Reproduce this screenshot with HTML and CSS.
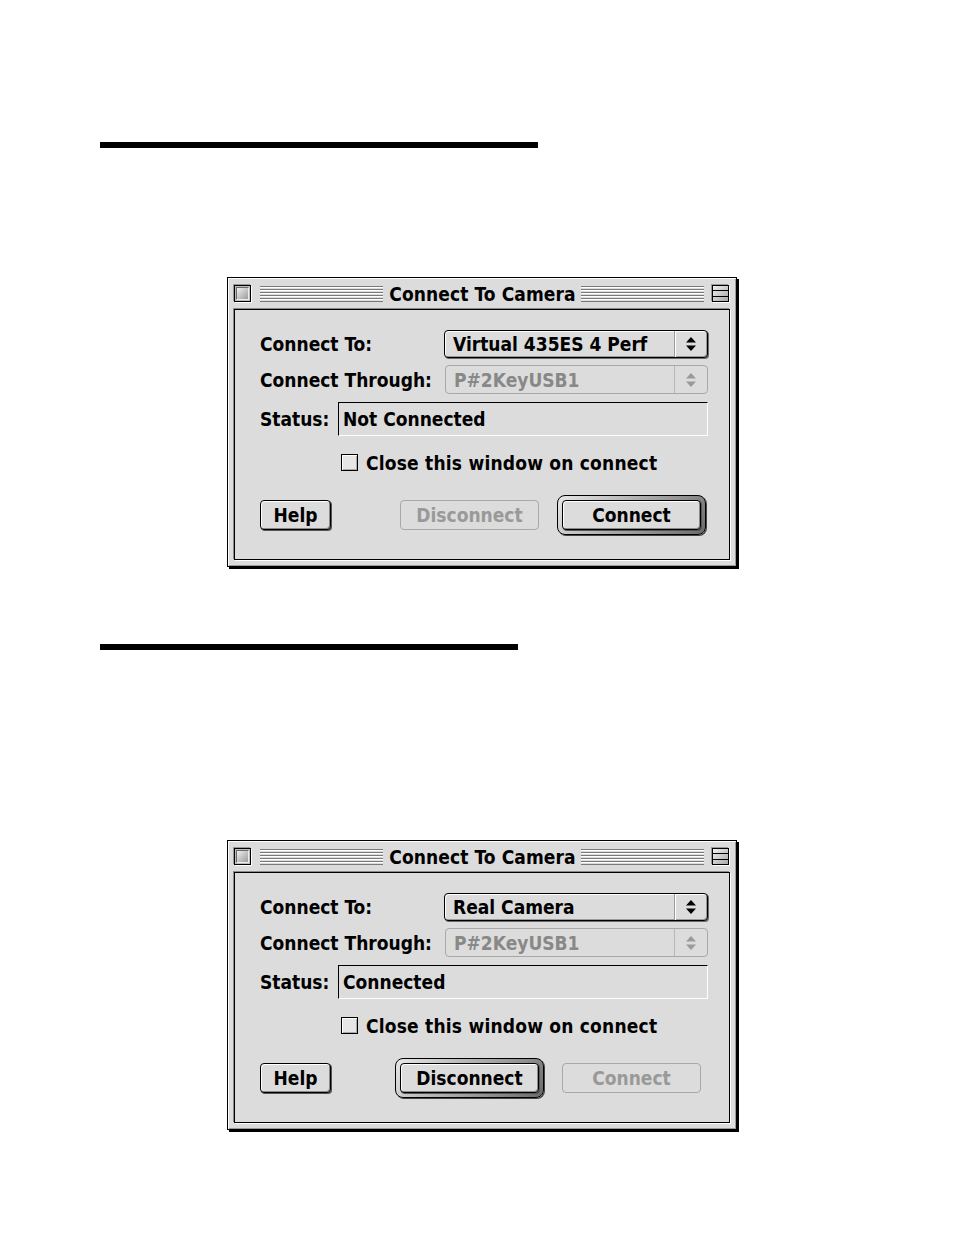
FILE: index.html
```html
<!DOCTYPE html>
<html>
<head>
<meta charset="utf-8">
<link rel="stylesheet" href="styles.css">
</head>
<body>
<div class="page">
  <div class="rule rule-a"></div>
  <div class="window win-a">
    <div class="titlebar">
      <span class="closebox"><span class="closebox-in"></span></span>
      <span class="stripes"></span>
      <span class="title">Connect To Camera</span>
      <span class="stripes"></span>
      <span class="zoombox"><span class="zb-line"></span><span class="zb-line"></span></span>
    </div>
    <div class="panel">
      <div class="row row-popup">
        <span class="label">Connect To:</span>
        <div class="popup">
          <span class="popup-text">Virtual 435ES 4 Perf</span>
          <span class="popup-arrows"><svg width="12" height="16" viewBox="0 0 12 16"><path d="M6 1 L11 6.5 L1 6.5 Z M6 15 L11 9.5 L1 9.5 Z" fill="#000"/></svg></span>
        </div>
      </div>
      <div class="row row-popup2">
        <span class="label">Connect Through:</span>
        <div class="popup popup-disabled">
          <span class="popup-text">P#2KeyUSB1</span>
          <span class="popup-arrows"><svg width="12" height="16" viewBox="0 0 12 16"><path d="M6 1 L11 6.5 L1 6.5 Z M6 15 L11 9.5 L1 9.5 Z" fill="#9a9a9a"/></svg></span>
        </div>
      </div>
      <div class="row row-status">
        <span class="label label-status">Status:</span>
        <div class="field">Not Connected</div>
      </div>
      <div class="row row-check">
        <span class="checkbox"></span>
        <span class="check-label">Close this window on connect</span>
      </div>
      <div class="row row-buttons">
        <span class="ring"><span class="btn btn-help">Help</span></span>
        <span class="spacer"></span>
        <span class="ring"><span class="btn btn-wide btn-disabled">Disconnect</span></span>
        <span class="ring ring-default"><span class="btn btn-wide">Connect</span></span>
      </div>
    </div>
  </div>

  <div class="rule rule-b"></div>
  <div class="window win-b">
    <div class="titlebar">
      <span class="closebox"><span class="closebox-in"></span></span>
      <span class="stripes"></span>
      <span class="title">Connect To Camera</span>
      <span class="stripes"></span>
      <span class="zoombox"><span class="zb-line"></span><span class="zb-line"></span></span>
    </div>
    <div class="panel">
      <div class="row row-popup">
        <span class="label">Connect To:</span>
        <div class="popup">
          <span class="popup-text">Real Camera</span>
          <span class="popup-arrows"><svg width="12" height="16" viewBox="0 0 12 16"><path d="M6 1 L11 6.5 L1 6.5 Z M6 15 L11 9.5 L1 9.5 Z" fill="#000"/></svg></span>
        </div>
      </div>
      <div class="row row-popup2">
        <span class="label">Connect Through:</span>
        <div class="popup popup-disabled">
          <span class="popup-text">P#2KeyUSB1</span>
          <span class="popup-arrows"><svg width="12" height="16" viewBox="0 0 12 16"><path d="M6 1 L11 6.5 L1 6.5 Z M6 15 L11 9.5 L1 9.5 Z" fill="#9a9a9a"/></svg></span>
        </div>
      </div>
      <div class="row row-status">
        <span class="label label-status">Status:</span>
        <div class="field">Connected</div>
      </div>
      <div class="row row-check">
        <span class="checkbox"></span>
        <span class="check-label">Close this window on connect</span>
      </div>
      <div class="row row-buttons">
        <span class="ring"><span class="btn btn-help">Help</span></span>
        <span class="spacer"></span>
        <span class="ring ring-default"><span class="btn btn-wide">Disconnect</span></span>
        <span class="ring"><span class="btn btn-wide btn-disabled">Connect</span></span>
      </div>
    </div>
  </div>
</div>
</body>
</html>
```
FILE: styles.css
```css
html, body {
  margin: 0;
  padding: 0;
  background: #fff;
}
body {
  width: 954px;
  height: 1235px;
  overflow: hidden;
  font-family: "DejaVu Sans Condensed", "DejaVu Sans", sans-serif;
  font-stretch: condensed;
  font-weight: bold;
  font-size: 19px;
  color: #000;
}
.page {
  display: flex;
  flex-direction: column;
  padding-top: 142px;
}
.rule {
  height: 6px;
  background: #000;
  margin-left: 100px;
}
.rule-a { width: 438px; }
.rule-b { width: 418px; margin-top: 77px; }
.window {
  margin-left: 227px;
  width: 508px;
  height: 288px;
  border: 1px solid #000;
  background: #dcdcdc;
  box-shadow: 2px 2px 0 #000, inset 1px 1px 0 #fff, inset -1px -1px 0 #9a9a9a;
  display: flex;
  flex-direction: column;
}
.win-a { margin-top: 129px; }
.win-b { margin-top: 190px; }

.titlebar {
  height: 31px;
  display: flex;
  align-items: center;
  padding: 0 7px 0 6px;
}
.closebox {
  width: 17px;
  height: 17px;
  box-sizing: border-box;
  border: 1px solid #000;
  box-shadow: 1px 1px 0 #fff, -1px -1px 0 #999;
  background: #bdbdbd;
  display: flex;
  padding: 1px;
}
.closebox-in {
  flex: 1;
  background: linear-gradient(135deg, #f0f0f0, #9c9c9c);
  border: 1px solid #6a6a6a;
  border-right-color: #eee;
  border-bottom-color: #eee;
}
.stripes {
  flex: 1;
  height: 16px;
  margin: 0 6px 0 9px;
  background: repeating-linear-gradient(to bottom, #7a7a7a 0 1px, #ffffff 1px 2px, #dcdcdc 2px 3px);
}
.stripes + .title + .stripes {
  margin: 0 8px 0 5px;
}
.title {
  white-space: nowrap;
  line-height: 20px;
  letter-spacing: 0.1px;
}
.zoombox {
  width: 17px;
  height: 17px;
  box-sizing: border-box;
  border: 1px solid #000;
  box-shadow: 1px 1px 0 #fff, -1px -1px 0 #999;
  background: linear-gradient(135deg, #f0f0f0, #a8a8a8);
  display: flex;
  flex-direction: column;
  justify-content: space-evenly;
}
.zb-line {
  height: 1px;
  background: #000;
}

.panel {
  flex: 1;
  margin: 0 6px 6px 6px;
  border: 1px solid #000;
  box-shadow: -1px -1px 0 #8a8a8a, 1px 1px 0 #fff;
  background: #dcdcdc;
  padding: 20px 21px 0 25px;
  display: flex;
  flex-direction: column;
}
.row {
  display: flex;
  align-items: center;
}
.label {
  width: 184px;
  white-space: nowrap;
}
.label-status { width: 78px; }

.popup {
  flex: 1;
  height: 28px;
  box-sizing: border-box;
  border: 1px solid #000;
  border-radius: 4px;
  background: #dcdcdc;
  box-shadow: inset 1px 1px 0 #fff, inset -1px -1px 0 #9a9a9a, 1px 1px 0 #6a6a6a;
  display: flex;
  align-items: center;
}
.popup-text {
  flex: 1;
  padding-left: 8px;
  white-space: nowrap;
}
.popup-arrows {
  width: 32px;
  align-self: stretch;
  border-left: 1px solid #9a9a9a;
  box-shadow: inset 1px 0 0 #fff;
  display: flex;
  align-items: center;
  justify-content: center;
}
.row-popup2 { margin-top: 7px; }
.popup-disabled {
  height: 29px;
  border-color: #a8a8a8;
  box-shadow: none;
  color: #888;
  margin-left: 1px;
}
.popup-disabled .popup-arrows {
  border-left-color: #b8b8b8;
  box-shadow: none;
}

.row-status { margin-top: 8px; }
.field {
  flex: 1;
  height: 34px;
  box-sizing: border-box;
  border-top: 1px solid #000;
  border-left: 1px solid #000;
  border-right: 1px solid #fff;
  border-bottom: 1px solid #fff;
  background: #dcdcdc;
  padding-left: 4px;
  display: flex;
  align-items: center;
  white-space: nowrap;
}

.row-check {
  margin-top: 18px;
  padding-left: 81px;
  height: 17px;
}
.checkbox {
  width: 17px;
  height: 17px;
  box-sizing: border-box;
  border: 1px solid #000;
  background: #e6e6e6;
  box-shadow: inset 1px 1px 0 #fff, inset -1px -1px 0 #aaa;
  margin-right: 8px;
}
.check-label { white-space: nowrap; letter-spacing: 0.2px; }

.row-buttons {
  margin-top: 24px;
  margin-right: 2px;
}
.spacer { flex: 1; }
.ring {
  display: flex;
  padding: 5px;
  border-radius: 8px;
  box-sizing: border-box;
}
.ring:first-child { margin-left: -5px; }
.ring + .ring { margin-left: 13px; }
.ring-default {
  padding: 2px;
  border: 1px solid #000;
  background: linear-gradient(135deg, #e8e8e8, #6a6a6a);
  box-shadow: 1px 1px 0 #444;
}
.ring-default .btn {
  margin: 2px;
}
.btn {
  height: 30px;
  box-sizing: border-box;
  border: 1px solid #000;
  border-radius: 4px;
  background: #dcdcdc;
  box-shadow: inset 1px 1px 0 #fff, inset -1px -1px 0 #8a8a8a, 1px 1px 0 #555;
  display: flex;
  align-items: center;
  justify-content: center;
  white-space: nowrap;
}
.btn-help { width: 71px; }
.btn-wide { width: 139px; }
.btn-disabled {
  border-color: #a8a8a8;
  box-shadow: none;
  color: #999;
}
```
